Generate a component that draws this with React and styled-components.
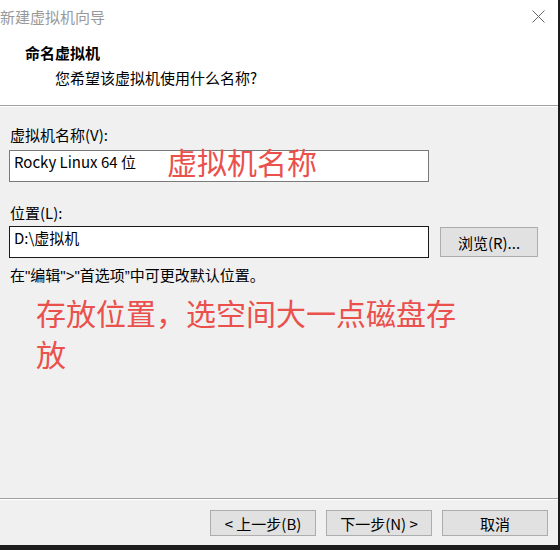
import React from 'react';
import styled, { createGlobalStyle } from 'styled-components';

const GlobalStyle = createGlobalStyle`
  html, body {
    margin: 0;
    padding: 0;
    background: #1c1c1c;
  }
  body {
    width: 560px;
    height: 550px;
    overflow: hidden;
    font-family: "Noto Sans CJK SC", "Noto Sans", sans-serif;
  }
`;

const Window = styled.div`
  width: 558px;
  height: 545px;
  display: flex;
  flex-direction: column;
  background: #f0f0f0;
  color: #000;
  font-size: 15px;
`;

const TitleBar = styled.div`
  height: 32px;
  display: flex;
  align-items: center;
  justify-content: space-between;
  background: #fff;
  padding: 0 13px 0 0;
  color: #999;
  font-size: 15px;
  .close {
    display: block;
  }
`;

const Header = styled.div`
  height: 74px;
  background: #fff;
  border-bottom: 1px solid #a0a0a0;
  box-shadow: 0 1px 0 #fff;
  padding-top: 11px;
  box-sizing: border-box;
  display: flex;
  flex-direction: column;
  gap: 5px;
`;

const HeaderTitle = styled.div`
  margin-left: 25px;
  font-weight: bold;
  line-height: 20px;
`;

const HeaderDesc = styled.div`
  margin-left: 55px;
  line-height: 20px;
`;

const Body = styled.div`
  position: relative;
  flex: 1;
  padding: 19px 0 0 10px;
  display: flex;
  flex-direction: column;
`;

const Label = styled.div`
  line-height: 20px;
  margin-top: ${(p) => p.$top || 0}px;
`;

const Row = styled.div`
  display: flex;
  align-items: center;
  gap: 11px;
  margin-top: ${(p) => p.$top || 0}px;
`;

const Field = styled.div`
  width: 420px;
  height: 32px;
  margin-left: -1px;
  box-sizing: border-box;
  background: #fff;
  border: 1px solid ${(p) => (p.$focused ? '#1a1a1a' : '#7a7a7a')};
  padding: 1px 4px;
  line-height: 20px;
`;

const Hint = styled.div`
  line-height: 20px;
  margin-top: 7px;
  .q {
    font-family: "Liberation Sans", sans-serif;
  }
`;

const Button = styled.div`
  width: ${(p) => p.$w || 106}px;
  height: ${(p) => p.$h || 26}px;
  box-sizing: border-box;
  background: #e1e1e1;
  border: 1px solid #adadad;
  display: flex;
  align-items: center;
  justify-content: center;
  font-size: 15px;
  white-space: pre;
`;

const Note = styled.div`
  color: #ea514d;
  font-size: 30px;
  line-height: 41px;
`;

const NameNote = styled(Note)`
  position: absolute;
  left: 167px;
  top: 35px;
`;

const PlaceNote = styled(Note)`
  margin: 6px 0 0 26px;
  width: 430px;
`;

const Footer = styled.div`
  height: 47px;
  border-top: 1px solid #a0a0a0;
  box-shadow: inset 0 1px 0 #fff;
  box-sizing: border-box;
  display: flex;
  justify-content: flex-end;
  gap: 10px;
  padding: 11px 10px 0 0;
`;

const CloseIcon = () => (
  <svg className="close" width="13" height="13" viewBox="0 0 13 13">
    <path d="M0.5 0.5 L12.5 12.5 M12.5 0.5 L0.5 12.5" stroke="#666" strokeWidth="1" fill="none" />
  </svg>
);

export default function App() {
  return (
    <>
      <GlobalStyle />
      <Window>
        <TitleBar>
          <span>新建虚拟机向导</span>
          <CloseIcon />
        </TitleBar>
        <Header>
          <HeaderTitle>命名虚拟机</HeaderTitle>
          <HeaderDesc>您希望该虚拟机使用什么名称?</HeaderDesc>
        </Header>
        <Body>
          <Label>虚拟机名称(V):</Label>
          <Row $top={5}>
            <Field>Rocky Linux 64 位</Field>
          </Row>
          <Label $top={21}>位置(L):</Label>
          <Row $top={3}>
            <Field $focused>D:\虚拟机</Field>
            <Button $w={98} $h={30}>浏览(R)...</Button>
          </Row>
          <Hint>
            在<span className="q">"</span>编辑<span className="q">"&gt;"</span>首选项<span className="q">”</span>中可更改默认位置。
          </Hint>
          <PlaceNote>存放位置，选空间大一点磁盘存放</PlaceNote>
          <NameNote>虚拟机名称</NameNote>
        </Body>
        <Footer>
          <Button>{'< 上一步(B)'}</Button>
          <Button>{'下一步(N) >'}</Button>
          <Button>取消</Button>
        </Footer>
      </Window>
    </>
  );
}
